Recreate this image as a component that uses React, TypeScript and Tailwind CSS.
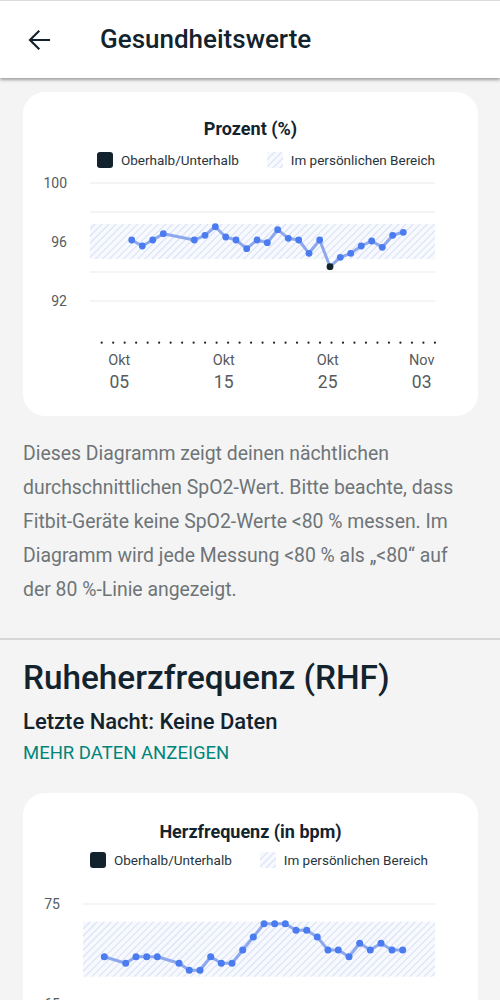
import React from "react";

const font = { fontFamily: "Roboto, 'Noto Sans', sans-serif" };

// SpO2 points, coordinates inside the plot svg (card-relative)
const spo2 = [
  [108.7, 72], [119.3, 78], [129.7, 72], [140.3, 65.7], [171.3, 72], [182, 67.3],
  [192.3, 58.7], [202.7, 69], [213, 72], [223.7, 80.7], [234, 72], [244.3, 74.7],
  [254.7, 61.7], [265.3, 70.3], [275.7, 72], [286, 85.3], [296.7, 72], [307, 98.7],
  [317.3, 89.3], [327.7, 85.3], [338.3, 78], [348.7, 73], [359.3, 79.3], [369.7, 67.3],
  [380.3, 64.3],
];

const rhf = [
  [81.3, 88.7], [102.7, 95.3], [113, 88.7], [123.7, 88.7], [134.3, 88.7], [156, 95.3],
  [166.3, 102.3], [177, 102.3], [187.7, 88.7], [198.3, 95.3], [209, 95.3], [219.7, 82],
  [230.3, 69], [241, 55.7], [251.7, 55.7], [262.3, 55.7], [273, 62.3], [283.7, 62.3],
  [294.3, 69], [305, 82], [315.3, 82], [326, 88.7], [336.7, 75.3], [347.3, 82],
  [358, 75.3], [369, 82], [379.7, 82],
];

const xLabels = [
  { m: "Okt", d: "05", x: 96.3 },
  { m: "Okt", d: "15", x: 200.7 },
  { m: "Okt", d: "25", x: 304.7 },
  { m: "Nov", d: "03", x: 398.7 },
];

const description = [
  "Dieses Diagramm zeigt deinen nächtlichen",
  "durchschnittlichen SpO2-Wert. Bitte beachte, dass",
  "Fitbit-Geräte keine SpO2-Werte <80 % messen. Im",
  "Diagramm wird jede Messung <80 % als „<80“ auf",
  "der 80 %-Linie angezeigt.",
];

function Hatch({ id }: { id: string }) {
  return (
    <defs>
      <pattern id={id} width="5" height="5" patternUnits="userSpaceOnUse" patternTransform="rotate(45)">
        <rect width="5" height="5" fill="#f7f9fe" />
        <line x1="0" y1="0" x2="0" y2="5" stroke="#d6e0f4" strokeWidth="2" />
      </pattern>
    </defs>
  );
}

function Legend({ shift }: { shift: string }) {
  return (
    <div className={`flex justify-center items-center gap-2 text-[13.5px] text-[#27343d] ${shift}`}>
      <span className="w-4 h-4 rounded-[3px] bg-[#13232e]" />
      <span className="leading-4 mr-5">Oberhalb/Unterhalb</span>
      <svg width="16" height="16" className="rounded-[2px]">
        <Hatch id="lg" />
        <rect width="16" height="16" fill="url(#lg)" />
      </svg>
      <span className="leading-4">Im persönlichen Bereich</span>
    </div>
  );
}

function line(pts: number[][]) {
  return pts.map((p, i) => `${i ? "L" : "M"}${p[0]} ${p[1]}`).join(" ");
}

function Spo2Chart() {
  const dots = Array.from({ length: 30 }, (_, i) => 78.7 + i * 11.49);
  return (
    <svg width="455" height="248" className="block" style={font}>
      <Hatch id="h1" />
      {[15, 44, 104, 133].map((y) => (
        <line key={y} x1="67" x2="412" y1={y} y2={y} stroke="#f0f0f0" strokeWidth="1.5" />
      ))}
      <rect x="67" y="56" width="345" height="35" fill="url(#h1)" />
      {[["100", 15], ["96", 74], ["92", 133]].map(([t, y]) => (
        <text key={t} x="44" y={y} textAnchor="end" dominantBaseline="central" fontSize="14" fill="#555b60">
          {t}
        </text>
      ))}
      <path d={line(spo2)} fill="none" stroke="#8ea8ee" strokeWidth="3" strokeLinejoin="round" />
      {spo2.map(([x, y], i) => (
        <circle key={i} cx={x} cy={y} r="3.4" fill={i === 17 ? "#13232e" : "#4a7cf0"} />
      ))}
      {dots.map((x) => (
        <circle key={x} cx={x} cy="174.7" r="1.1" fill="#222" />
      ))}
      {xLabels.map((l) => (
        <g key={l.d}>
          <text x={l.x} y="192" textAnchor="middle" dominantBaseline="central" fontSize="14.5" fill="#555b60">
            {l.m}
          </text>
          <text x={l.x} y="214" textAnchor="middle" dominantBaseline="central" fontSize="17.5" fill="#555b60">
            {l.d}
          </text>
        </g>
      ))}
    </svg>
  );
}

function RhfChart() {
  return (
    <svg width="455" height="200" className="block" style={font}>
      <Hatch id="h2" />
      {[36, 136].map((y) => (
        <line key={y} x1="60" x2="412" y1={y} y2={y} stroke="#f0f0f0" strokeWidth="1.5" />
      ))}
      <rect x="60" y="53.7" width="352" height="55" fill="url(#h2)" />
      {[["75", 36], ["65", 136]].map(([t, y]) => (
        <text key={t} x="37" y={y} textAnchor="end" dominantBaseline="central" fontSize="14" fill="#555b60">
          {t}
        </text>
      ))}
      <path d={line(rhf)} fill="none" stroke="#8ea8ee" strokeWidth="3" strokeLinejoin="round" />
      {rhf.map(([x, y], i) => (
        <circle key={i} cx={x} cy={y} r="3.5" fill="#4a7cf0" />
      ))}
    </svg>
  );
}

export default function App() {
  return (
    <div className="w-[500px] h-[1000px] overflow-hidden bg-[#f4f4f4]" style={font}>
      {/* App bar */}
      <header className="relative z-10 h-[78px] bg-white border-t border-[#dcdcdc] shadow-[0_2px_3px_rgba(0,0,0,0.35)] flex items-center">
        <svg width="24" height="24" viewBox="0 0 24 24" className="ml-[27px]" fill="none" stroke="#13232e" strokeWidth="2.2" strokeLinecap="square">
          <path d="M22 12H3.5M11.5 3.5L3 12l8.5 8.5" />
        </svg>
        <h1 className="ml-[49px] text-[26px] font-medium text-[#13232e]">Gesundheitswerte</h1>
      </header>

      {/* SpO2 card */}
      <section className="mt-[14px] ml-[23px] w-[455px] h-[324px] bg-white rounded-[22px] overflow-hidden">
        <h2 className="pt-[27px] text-center text-[18px] leading-5 font-bold text-[#13232e]">Prozent (%)</h2>
        <div className="mt-[13px]">
          <Legend shift="pl-[31px]" />
        </div>
        <Spo2Chart />
      </section>

      <div className="mt-[21px] px-[23px] text-[19.4px] leading-[34px] text-[#6e7478]">
        {description.map((l) => (
          <p key={l} className="whitespace-nowrap">{l}</p>
        ))}
      </div>

      <div className="mt-[31px] h-[2px] bg-[#d6d6d6]" />

      <div className="px-[23px]">
        <h2 className="mt-[18px] text-[33.3px] leading-10 font-medium text-[#13232e]">Ruheherzfrequenz (RHF)</h2>
        <p className="mt-[10px] text-[22px] leading-7 font-medium text-[#13232e]">Letzte Nacht: Keine Daten</p>
        <a className="block mt-[5px] text-[18.5px] leading-6 text-[#00857a]">MEHR DATEN ANZEIGEN</a>
      </div>

      {/* RHF card */}
      <section className="mt-[28px] ml-[23px] w-[455px] h-[330px] bg-white rounded-[22px] overflow-hidden">
        <h2 className="pt-[29px] text-center text-[18px] leading-5 font-bold text-[#13232e]">Herzfrequenz (in bpm)</h2>
        <div className="mt-[10px]">
          <Legend shift="pl-[17px]" />
        </div>
        <RhfChart />
      </section>
    </div>
  );
}
